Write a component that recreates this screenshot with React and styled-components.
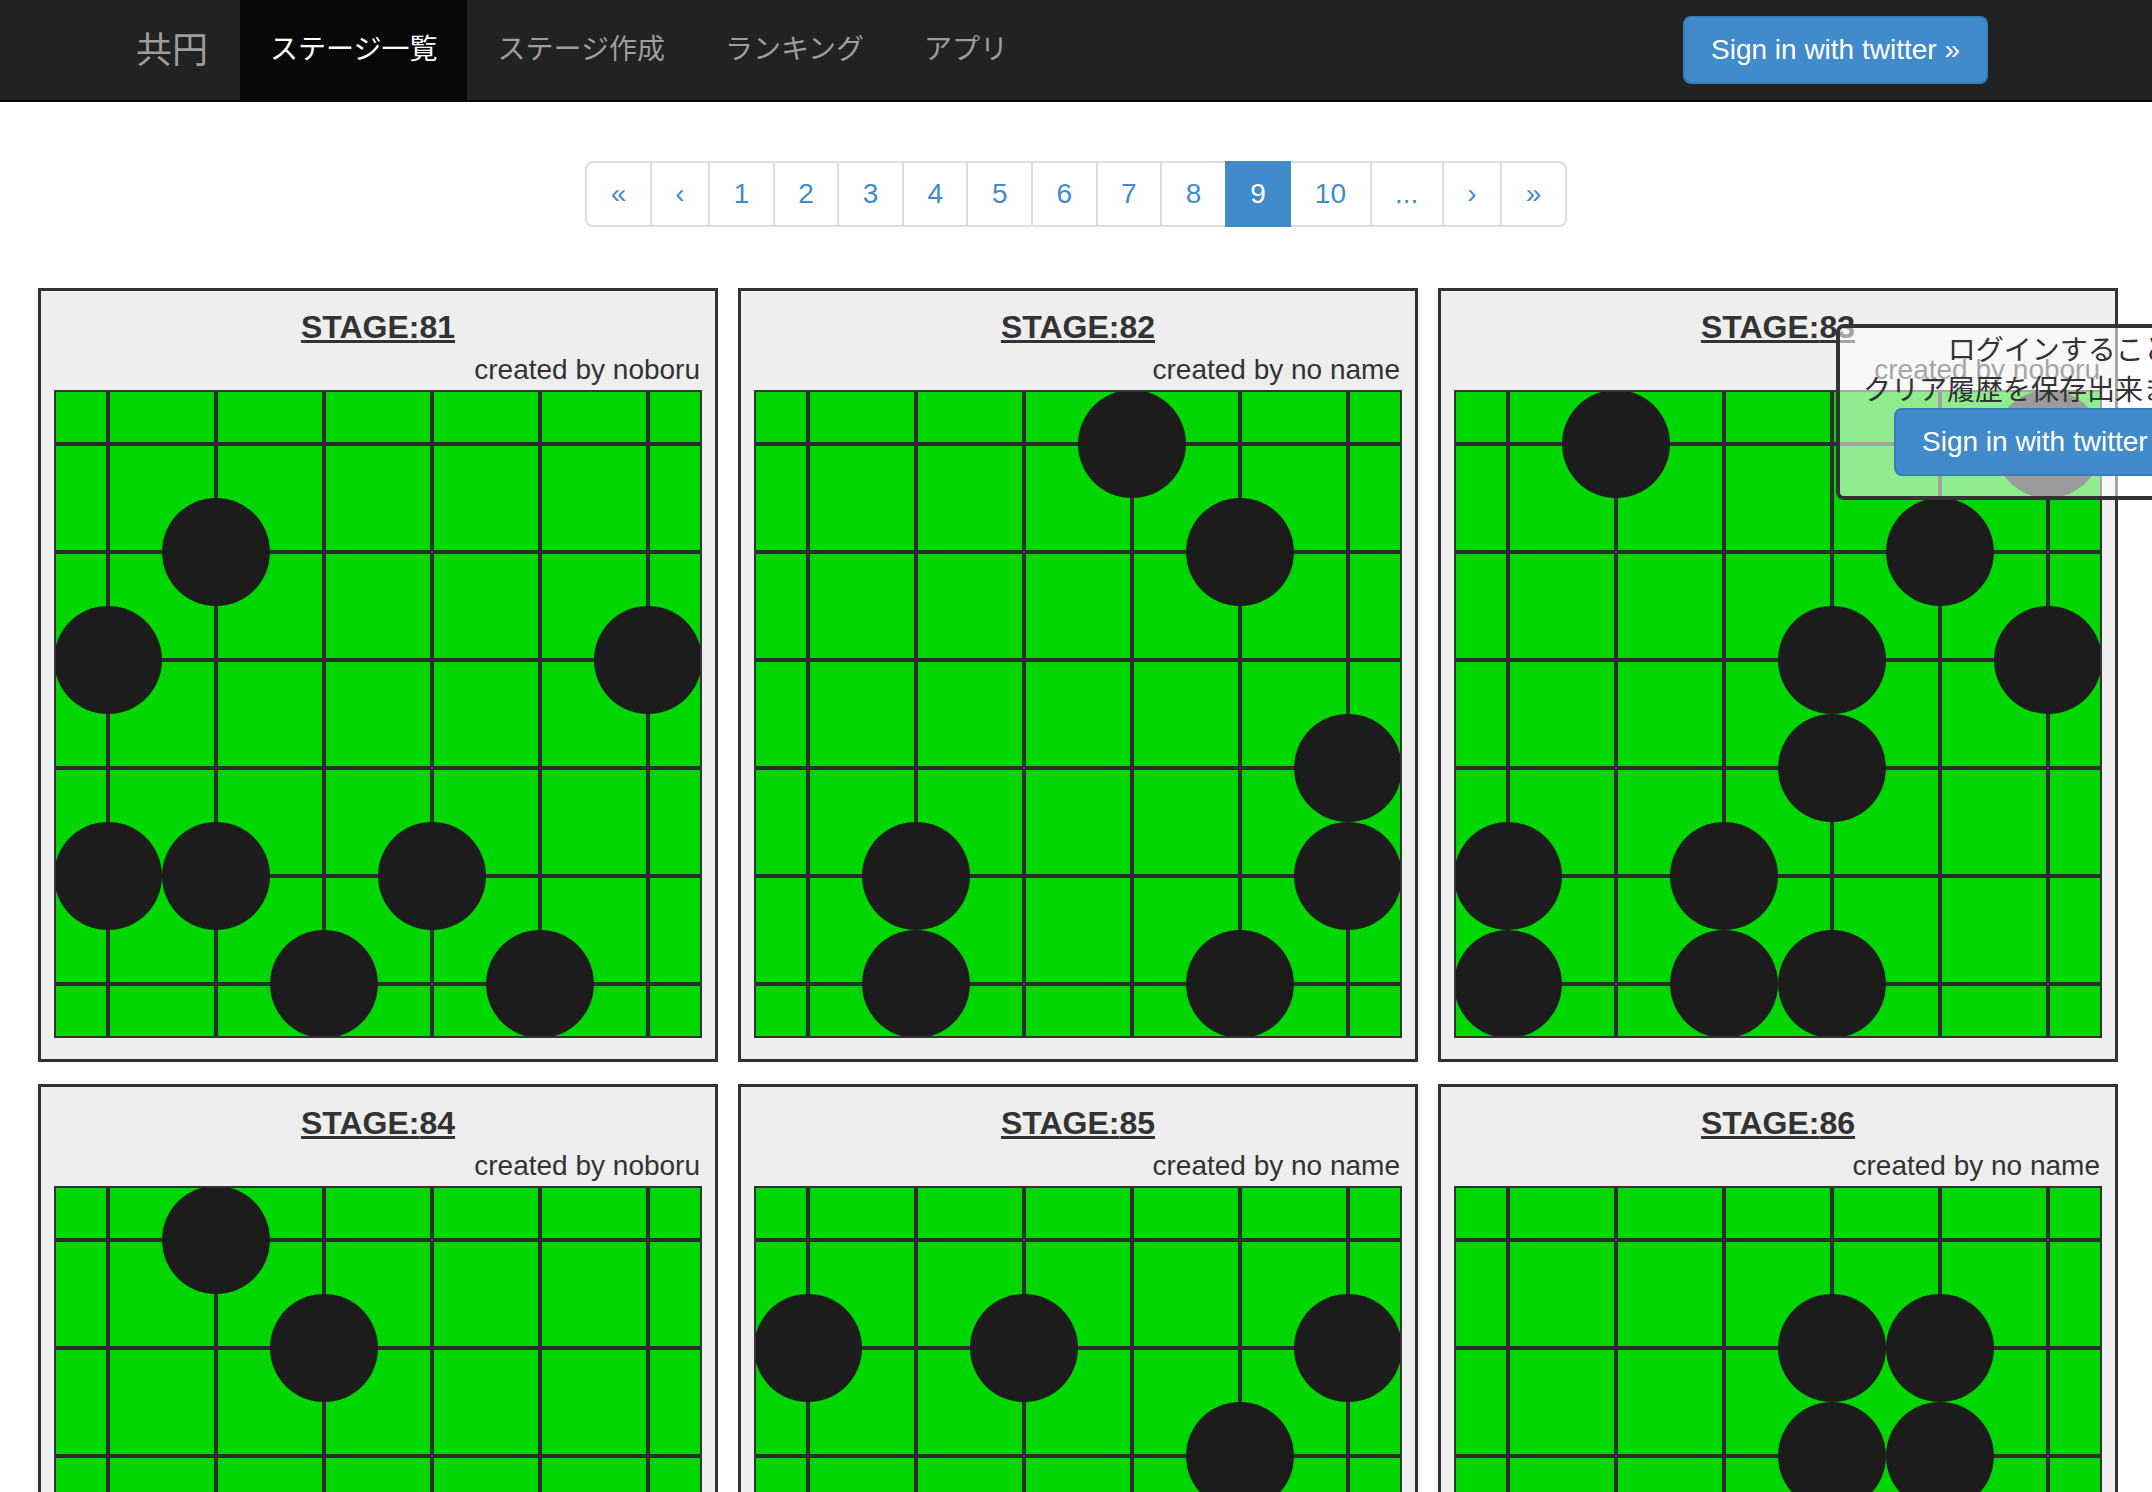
import styled, { createGlobalStyle } from "styled-components";

const GlobalStyle = createGlobalStyle`
	* {
		box-sizing: border-box;
	}
	body {
		margin: 0;
		background: #fff;
		color: #333;
		font-family: "Liberation Sans", "Noto Sans CJK JP", sans-serif;
		overflow-x: hidden;
	}
`;

const CELL = 108;
const SIZE = 648;

const stages = [
	{ id: 81, author: "noboru", stones: [[1, 1], [0, 2], [5, 2], [0, 4], [1, 4], [3, 4], [2, 5], [4, 5]] },
	{ id: 82, author: "no name", stones: [[3, 0], [4, 1], [5, 3], [5, 4], [1, 4], [1, 5], [4, 5]] },
	{ id: 83, author: "noboru", stones: [[1, 0], [5, 0], [4, 1], [3, 2], [5, 2], [3, 3], [0, 4], [2, 4], [0, 5], [2, 5], [3, 5]] },
	{ id: 84, author: "noboru", stones: [[1, 0], [2, 1], [3, 3], [0, 4], [4, 5]] },
	{ id: 85, author: "no name", stones: [[0, 1], [2, 1], [5, 1], [4, 2], [1, 4], [3, 5]] },
	{ id: 86, author: "no name", stones: [[3, 1], [4, 1], [3, 2], [4, 2], [2, 4], [5, 5]] },
];

const pages = ["«", "‹", "1", "2", "3", "4", "5", "6", "7", "8", "9", "10", "...", "›", "»"];

const Board = ({ stones }) => {
	const lines = [0, 1, 2, 3, 4, 5].map((i) => CELL / 2 + CELL * i);
	return (
		<svg width={SIZE} height={SIZE} viewBox={`0 0 ${SIZE} ${SIZE}`} style={{ display: "block" }}>
			<rect x="0" y="0" width={SIZE} height={SIZE} fill="#00d700" />
			{lines.map((p) => (
				<g key={p}>
					<line x1={p} y1="0" x2={p} y2={SIZE} stroke="#2d2d2d" strokeWidth="4" />
					<line x1="0" y1={p} x2={SIZE} y2={p} stroke="#2d2d2d" strokeWidth="4" />
				</g>
			))}
			{stones.map(([c, r]) => (
				<circle key={`${c}-${r}`} cx={lines[c]} cy={lines[r]} r="54" fill="#1c1c1c" />
			))}
			<rect x="1" y="1" width={SIZE - 2} height={SIZE - 2} fill="none" stroke="#333" strokeWidth="2" />
		</svg>
	);
};

const App = () => {
	return (
		<Page>
			<GlobalStyle />
			<Navbar>
				<NavInner>
					<Brand>共円</Brand>
					<NavLink $active>ステージ一覧</NavLink>
					<NavLink>ステージ作成</NavLink>
					<NavLink>ランキング</NavLink>
					<NavLink>アプリ</NavLink>
					<NavButton>Sign in with twitter »</NavButton>
				</NavInner>
			</Navbar>

			<Pager>
				{pages.map((p, i) => (
					<PageItem key={i} $active={p === "9"}>
						{p}
					</PageItem>
				))}
			</Pager>

			<Grid>
				{stages.map((s) => (
					<Card key={s.id}>
						<Title>
							<a href="#">STAGE:{s.id}</a>
						</Title>
						<Author>created by {s.author}</Author>
						<Board stones={s.stones} />
					</Card>
				))}
			</Grid>

			<Popup>
				<p>
					ログインすることで
					<br />
					クリア履歴を保存出来ます
				</p>
				<TwitterButton>Sign in with twitter »</TwitterButton>
			</Popup>
		</Page>
	);
};

export default App;

const Page = styled.div`
	position: relative;
	min-height: 1492px;
	overflow: hidden;
`;

const Navbar = styled.nav`
	height: 102px;
	background: #222;
	border-bottom: 2px solid #080808;
`;

const NavInner = styled.div`
	display: flex;
	width: 1940px;
	height: 100px;
	margin: 0 auto;
`;

const Brand = styled.a`
	padding: 0 32px 5px 30px;
	font-family: "Noto Sans CJK JP", sans-serif;
	font-size: 36px;
	line-height: 95px;
	color: #9d9d9d;
`;

const NavLink = styled.a`
	padding: 0 30px 5px;
	font-family: "Noto Sans CJK JP", sans-serif;
	font-size: 28px;
	line-height: 95px;
	color: ${({ $active }) => ($active ? "#fff" : "#9d9d9d")};
	background: ${({ $active }) => ($active ? "#080808" : "transparent")};
`;

const TwitterButton = styled.button`
	display: inline-block;
	padding: 12px 26px;
	font-family: "Liberation Sans", sans-serif;
	font-size: 28px;
	line-height: 40px;
	color: #fff;
	background: #428bca;
	border: 2px solid #357ebd;
	border-radius: 8px;
	white-space: nowrap;
	cursor: pointer;
`;

const NavButton = styled(TwitterButton)`
	align-self: center;
	margin-left: auto;
	margin-right: 58px;
`;

const Pager = styled.ul`
	display: flex;
	justify-content: center;
	list-style: none;
	margin: 59px 0 0;
	padding: 0;
`;

const PageItem = styled.li`
	position: relative;
	z-index: ${({ $active }) => ($active ? 2 : 0)};
	margin-left: -2px;
	padding: 12px 23.5px;
	font-size: 28px;
	line-height: 38px;
	color: ${({ $active }) => ($active ? "#fff" : "#428bca")};
	background: ${({ $active }) => ($active ? "#428bca" : "#fff")};
	border: 2px solid ${({ $active }) => ($active ? "#428bca" : "#ddd")};

	&:first-child {
		margin-left: 0;
		border-radius: 8px 0 0 8px;
	}
	&:last-child {
		border-radius: 0 8px 8px 0;
	}
`;

const Grid = styled.div`
	display: grid;
	grid-template-columns: repeat(3, 680px);
	gap: 22px 20px;
	margin-top: 61px;
	padding-left: 38px;
`;

const Card = styled.div`
	padding: 0 13px 21px;
	background: #eee;
	border: 3px solid #333;
	text-align: center;
`;

const Title = styled.h3`
	margin: 16px 0 3px;
	font-size: 32px;
	line-height: 40px;
	font-weight: bold;

	a {
		color: #333;
		text-decoration: underline;
	}
`;

const Author = styled.div`
	padding-right: 2px;
	font-size: 28px;
	line-height: 40px;
	text-align: right;
	color: #333;
`;

const Popup = styled.div`
	position: absolute;
	left: 1836px;
	top: 324px;
	width: 387px;
	padding: 0 20px 20px;
	text-align: right;
	background: rgba(255, 255, 255, 0.56);
	border: 4px solid #333;
	border-radius: 8px;

	p {
		margin: 0;
		font-family: "Noto Sans CJK JP", sans-serif;
		font-size: 28px;
		line-height: 40px;
		color: #333;
		white-space: nowrap;
	}
`;
